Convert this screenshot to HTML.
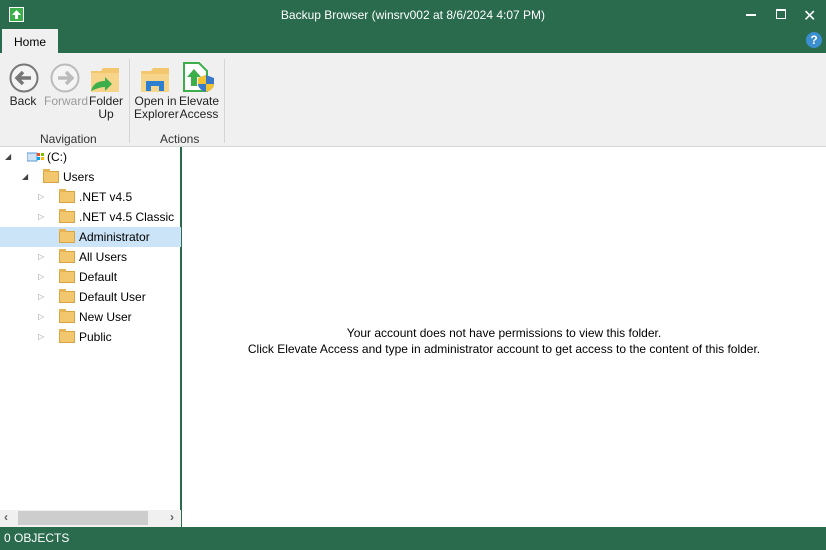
<!DOCTYPE html>
<html><head><style>
*{margin:0;padding:0;box-sizing:border-box}
body{width:826px;height:550px;overflow:hidden;font-family:"Liberation Sans",sans-serif;font-size:12px;background:#2a6b4e;position:relative;color:#000}
.abs{position:absolute}
.title{left:0;top:0;width:826px;height:30px;color:#fff;text-align:center;line-height:30px;font-size:12px}
.tab{left:2px;top:29px;width:56px;height:25px;background:#f0f0f0;text-align:center;line-height:26px}
.ribbon{left:0;top:53px;width:826px;height:94px;background:#f0f0f0;border-bottom:1px solid #d5d5d5}
.lbl{font-size:12px;text-align:center;line-height:13px;color:#222}
.grp{font-size:12px;color:#333}
.left{left:0;top:147px;width:181px;height:380px;background:#fff;border-right:1px solid #2a6b4e}
.right{left:182px;top:147px;width:644px;height:380px;background:#fff}
.row{position:absolute;left:0;width:181px;height:20px;line-height:20px}
.fold{position:absolute;width:16px;height:12px;background:#f3c76e;border:1px solid #d9a441;top:4px}
.fold:before{content:"";position:absolute;left:-1px;top:-3px;width:7px;height:3px;background:#e8b453}
.arr{position:absolute;color:#999;font-size:8px}
.status{left:0;top:527px;width:826px;height:23px;color:#fff;line-height:23px;padding-left:4px;font-size:12px}
</style></head><body>
<div class="abs title">Backup Browser (winsrv002 at 8/6/2024 4:07 PM)</div>
<div class="abs" style="left:9px;top:7px;width:15px;height:15px;border:1px solid #fff;background:#3cae4a"><svg width="13" height="13"><path d="M6.5 2L2 7h3v4h3V7h3z" fill="#fff"/></svg></div>
<div class="abs" style="left:746px;top:14px;width:10px;height:2px;background:#fff"></div>
<div class="abs" style="left:776px;top:9px;width:10px;height:10px;border:1px solid #fff;border-top-width:2px"></div>
<div class="abs" style="left:803px;top:6px;color:#fff;font-size:16px">✕</div>
<div class="abs" style="left:806px;top:32px;width:16px;height:16px;border-radius:50%;background:#3b8fd0;color:#fff;font-weight:bold;text-align:center;line-height:16px;font-size:12px">?</div>
<div class="abs tab">Home</div>
<div class="abs ribbon">
 <svg class="abs" style="left:9px;top:10px" width="30" height="30"><circle cx="15" cy="15" r="13.5" fill="#f4f4f4" stroke="#777" stroke-width="2"/><path d="M22 15H9M14 9l-6 6 6 6" stroke="#777" stroke-width="3.5" fill="none"/></svg>
 <svg class="abs" style="left:50px;top:10px" width="30" height="30"><circle cx="15" cy="15" r="13.5" fill="#f4f4f4" stroke="#bbb" stroke-width="2"/><path d="M8 15h13M16 9l6 6-6 6" stroke="#bbb" stroke-width="3.5" fill="none"/></svg>
 <svg class="abs" style="left:89px;top:12px" width="32" height="28"><path d="M2 6h10l2-3h16v24H2z" fill="#f3c76e"/><path d="M2 8h28v19H2z" fill="#f6d48a"/><path d="M2 26c2-8 8-10 14-10v-4l7 7-7 7v-4c-5 0-9 2-14 4z" fill="#3cae4a"/></svg>
 <div class="abs lbl" style="left:8px;top:42px;width:30px">Back</div>
 <div class="abs lbl" style="left:44px;top:42px;width:42px;color:#9a9a9a">Forward</div>
 <div class="abs lbl" style="left:88px;top:42px;width:36px">Folder<br>Up</div>
 <div class="abs grp" style="left:40px;top:79px">Navigation</div>
 <div class="abs" style="left:129px;top:6px;width:1px;height:84px;background:#d5d5d5"></div>
 <svg class="abs" style="left:139px;top:12px" width="32" height="28"><path d="M2 6h10l2-3h16v24H2z" fill="#f3c76e"/><path d="M2 9h28v18H2z" fill="#f6d48a"/><path d="M7 26v-10h18v10h-5v-5h-8v5z" fill="#2f7fd0"/></svg>
 <svg class="abs" style="left:182px;top:8px" width="34" height="32"><path d="M2 2h15l8 8v20H2z" fill="#fff" stroke="#3cae4a" stroke-width="2"/><path d="M12 8l-7 8h4v9h6v-9h4z" fill="#3cae4a"/><path d="M24 14l8 3v6c0 4-4 7-8 8-4-1-8-4-8-8v-6z" fill="#3a78c8"/><path d="M24 14v9h8c0 4-4 7-8 8v-8h-8v-6z" fill="#f2c230"/></svg>
 <div class="abs lbl" style="left:134px;top:42px;width:43px">Open in<br>Explorer</div>
 <div class="abs lbl" style="left:178px;top:42px;width:42px">Elevate<br>Access</div>
 <div class="abs grp" style="left:160px;top:79px">Actions</div>
 <div class="abs" style="left:224px;top:6px;width:1px;height:84px;background:#d5d5d5"></div>
</div>
<div class="abs left">
 <div class="row" style="top:0"><span class="arr" style="left:5px;color:#444">◢</span>
  <svg class="abs" style="left:27px;top:5px" width="18" height="11"><rect x="0" y="1" width="10" height="8" fill="#cfe3f5" stroke="#5b9bd5"/><rect x="10" y="1" width="3" height="3" fill="#f25022"/><rect x="14" y="1" width="3" height="3" fill="#7fba00"/><rect x="10" y="5" width="3" height="3" fill="#00a4ef"/><rect x="14" y="5" width="3" height="3" fill="#ffb900"/></svg>
  <span class="abs" style="left:47px">(C:)</span></div>
 <div class="row" style="top:20px"><span class="arr" style="left:22px;color:#444">◢</span><span class="fold" style="left:43px"></span><span class="abs" style="left:63px">Users</span></div>
 <div class="row" style="top:40px"><span class="arr" style="left:38px">▷</span><span class="fold" style="left:59px"></span><span class="abs" style="left:79px">.NET v4.5</span></div>
 <div class="row" style="top:60px"><span class="arr" style="left:38px">▷</span><span class="fold" style="left:59px"></span><span class="abs" style="left:79px">.NET v4.5 Classic</span></div>
 <div class="row" style="top:80px;background:#cce4f7"><span class="fold" style="left:59px"></span><span class="abs" style="left:79px">Administrator</span></div>
 <div class="row" style="top:100px"><span class="arr" style="left:38px">▷</span><span class="fold" style="left:59px"></span><span class="abs" style="left:79px">All Users</span></div>
 <div class="row" style="top:120px"><span class="arr" style="left:38px">▷</span><span class="fold" style="left:59px"></span><span class="abs" style="left:79px">Default</span></div>
 <div class="row" style="top:140px"><span class="arr" style="left:38px">▷</span><span class="fold" style="left:59px"></span><span class="abs" style="left:79px">Default User</span></div>
 <div class="row" style="top:160px"><span class="arr" style="left:38px">▷</span><span class="fold" style="left:59px"></span><span class="abs" style="left:79px">New User</span></div>
 <div class="row" style="top:180px"><span class="arr" style="left:38px">▷</span><span class="fold" style="left:59px"></span><span class="abs" style="left:79px">Public</span></div>
 <div class="abs" style="left:0;top:363px;width:181px;height:17px;background:#f0f0f0"></div>
 <div class="abs" style="left:18px;top:364px;width:130px;height:14px;background:#cdcdcd"></div>
 <div class="abs" style="left:4px;top:363px;font-size:12px;color:#606060;font-weight:bold">‹</div>
 <div class="abs" style="left:170px;top:363px;font-size:12px;color:#606060;font-weight:bold">›</div>
</div>
<div class="abs right">
 <div class="abs" style="left:0;top:178px;width:644px;text-align:center;line-height:16px">Your account does not have permissions to view this folder.<br>Click Elevate Access and type in administrator account to get access to the content of this folder.</div>
</div>
<div class="abs status">0 OBJECTS</div>
</body></html>
